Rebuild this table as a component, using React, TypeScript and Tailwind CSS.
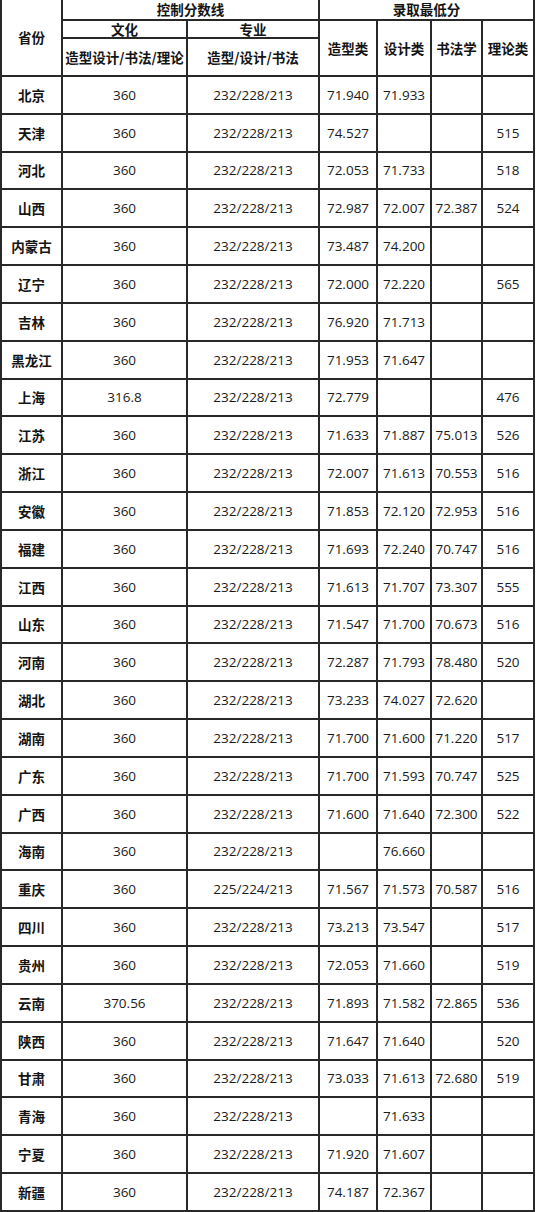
import React from 'react';

type Row = [string, string, string, string, string, string, string];

const P = '232/228/213';

const rows: Row[] = [
  ['北京', '360', P, '71.940', '71.933', '', ''],
  ['天津', '360', P, '74.527', '', '', '515'],
  ['河北', '360', P, '72.053', '71.733', '', '518'],
  ['山西', '360', P, '72.987', '72.007', '72.387', '524'],
  ['内蒙古', '360', P, '73.487', '74.200', '', ''],
  ['辽宁', '360', P, '72.000', '72.220', '', '565'],
  ['吉林', '360', P, '76.920', '71.713', '', ''],
  ['黑龙江', '360', P, '71.953', '71.647', '', ''],
  ['上海', '316.8', P, '72.779', '', '', '476'],
  ['江苏', '360', P, '71.633', '71.887', '75.013', '526'],
  ['浙江', '360', P, '72.007', '71.613', '70.553', '516'],
  ['安徽', '360', P, '71.853', '72.120', '72.953', '516'],
  ['福建', '360', P, '71.693', '72.240', '70.747', '516'],
  ['江西', '360', P, '71.613', '71.707', '73.307', '555'],
  ['山东', '360', P, '71.547', '71.700', '70.673', '516'],
  ['河南', '360', P, '72.287', '71.793', '78.480', '520'],
  ['湖北', '360', P, '73.233', '74.027', '72.620', ''],
  ['湖南', '360', P, '71.700', '71.600', '71.220', '517'],
  ['广东', '360', P, '71.700', '71.593', '70.747', '525'],
  ['广西', '360', P, '71.600', '71.640', '72.300', '522'],
  ['海南', '360', P, '', '76.660', '', ''],
  ['重庆', '360', '225/224/213', '71.567', '71.573', '70.587', '516'],
  ['四川', '360', P, '73.213', '73.547', '', '517'],
  ['贵州', '360', P, '72.053', '71.660', '', '519'],
  ['云南', '370.56', P, '71.893', '71.582', '72.865', '536'],
  ['陕西', '360', P, '71.647', '71.640', '', '520'],
  ['甘肃', '360', P, '73.033', '71.613', '72.680', '519'],
  ['青海', '360', P, '', '71.633', '', ''],
  ['宁夏', '360', P, '71.920', '71.607', '', ''],
  ['新疆', '360', P, '74.187', '72.367', '', ''],
];

// header cell (also used for province names)
function H({ className = '', children }: { className?: string; children?: React.ReactNode }) {
  return (
    <div
      className={`bg-white flex items-center justify-center font-bold text-[13.5px] text-[#141414] whitespace-nowrap ${className}`}
      style={{ fontFamily: '"Noto Sans CJK SC", sans-serif' }}
    >
      {children}
    </div>
  );
}

export default function App() {
  return (
    <div className="bg-white w-[536px] h-[1212px]">
      <div
        className="grid w-[535px] h-[1212px] bg-[#282828] gap-[2px] px-[2px] pb-[2px] grid-cols-[59px_123px_130px_56px_52px_49px_50px] grid-rows-[19px_16px_36px_repeat(30,minmax(0,1fr))]"
        style={{ fontFamily: '"Open Sans", "Noto Sans CJK SC", sans-serif' }}
      >
        <H className="row-span-3">省份</H>
        <H className="col-span-2">控制分数线</H>
        <H className="col-span-4">录取最低分</H>
        <H>文化</H>
        <H>专业</H>
        <H className="row-span-2">造型类</H>
        <H className="row-span-2">设计类</H>
        <H className="row-span-2">书法学</H>
        <H className="row-span-2">理论类</H>
        <H>造型设计/书法/理论</H>
        <H>造型/设计/书法</H>

        {rows.map((r) => (
          <React.Fragment key={r[0]}>
            <H>{r[0]}</H>
            {r.slice(1).map((v, i) => (
              <div
                key={i}
                className="bg-white flex items-center justify-center text-[13.5px] text-[#1a1a1a] whitespace-nowrap"
              >
                {v}
              </div>
            ))}
          </React.Fragment>
        ))}
      </div>
    </div>
  );
}
